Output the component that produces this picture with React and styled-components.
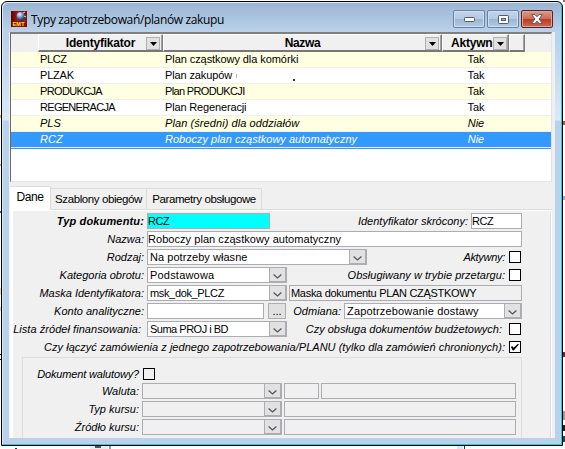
import React, { useState } from "react";
import styled, { createGlobalStyle, css } from "styled-components";

const documentTypes = [
  { id: "PLCZ", name: "Plan cząstkowy dla komórki", active: true, ls: [-0.4, -0.07] },
  { id: "PLZAK", name: "Plan zakupów", active: true, ls: [-0.2, -0.12], smudge: true },
  { id: "PRODUKCJA", name: "Plan PRODUKCJI", active: true, ls: [-0.65, -0.65] },
  { id: "REGENERACJA", name: "Plan Regeneracji", active: true, ls: [-0.7, -0.15] },
  { id: "PLS", name: "Plan (średni) dla oddziałów", active: false, ls: [0, 0.08] },
  { id: "RCZ", name: "Roboczy plan cząstkowy automatyczny", active: false, ls: [0, 0.02] },
];

function AppIcon() {
  return (
    <svg width="16" height="16" viewBox="0 0 16 16">
      <defs>
        <radialGradient id="globe" cx="40%" cy="30%" r="70%">
          <stop offset="0" stopColor="#e8f6ff" />
          <stop offset="0.5" stopColor="#6fa3cf" />
          <stop offset="1" stopColor="#23415f" />
        </radialGradient>
        <linearGradient id="iconBg" x1="0" x2="1" y1="0" y2="0">
          <stop offset="0" stopColor="#5d0505" />
          <stop offset="0.35" stopColor="#a80c0c" />
          <stop offset="1" stopColor="#8d0808" />
        </linearGradient>
      </defs>
      <rect width="16" height="16" fill="url(#iconBg)" />
      <path d="M5 10 L8 7 L13 7 L15 9 L15 11 L12 9 Z" fill="#31485c" />
      <circle cx="9.5" cy="5" r="4" fill="url(#globe)" />
      <path d="M12 2 L14 1 M13 5 L15 6" stroke="#d5e2ee" strokeWidth="1" />
      <text x="1.5" y="14.5" fontFamily="Liberation Sans, sans-serif" fontSize="5.5" fontWeight="700" fill="#ffee20" textLength="12">
        EMT
      </text>
    </svg>
  );
}

function Dropdown({ width, value, disabled, ls }) {
  return (
    <SelectBox $width={width} $disabled={disabled}>
      <SelectValue $ls={ls}>{value}</SelectValue>
      <SelectArrow>
        <svg width="9" height="5" viewBox="0 0 9 5">
          <path d="M0.6 0.6 L4.5 4 L8.4 0.6" fill="none" stroke="#555" strokeWidth="1.3" />
        </svg>
      </SelectArrow>
    </SelectBox>
  );
}

function Check({ checked, onChange, transparent }) {
  return (
    <CheckButton $transparent={transparent} onClick={onChange}>
      {checked && (
        <svg width="10" height="8" viewBox="0 0 10 8">
          <path d="M0.8 3.8 L2.4 3.2 L3.6 4.8 L8 0.8 L9 1.2 L3.8 7.4 L2.8 7.4 Z" fill="#000" />
        </svg>
      )}
    </CheckButton>
  );
}

function Filter({ right }) {
  return (
    <FilterButton $right={right}>
      <svg width="7" height="4" viewBox="0 0 7 4">
        <path d="M0 0 H7 L3.5 4 Z" fill="#000" />
      </svg>
    </FilterButton>
  );
}

function App() {
  const [selected, setSelected] = useState("RCZ");
  const [active, setActive] = useState(false);
  const [tender, setTender] = useState(false);
  const [budget, setBudget] = useState(false);
  const [merge, setMerge] = useState(true);
  const [currency, setCurrency] = useState(false);

  return (
    <Desktop>
      <GlobalStyle />
      <Speck $x={0} $y={115} $h={3} $color="#e8a040" />
      <Speck $x={0} $y={164} $h={2} $color="#e8a040" />
      <Speck $x={0} $y={211} $h={2} $color="#2860b0" />
      <Speck $x={0} $y={288} $h={7} $color="#f3dcae" />
      <Speck $x={0} $y={307} $h={4} $color="#e6cf9a" />
      <Speck $x={0} $y={354} $h={1} $color="#000" />
      <Speck $x={0} $y={359} $h={1} $color="#000" />
      <Speck $x={563} $y={0} $w={2} $h={2} $color="#777" />
      <Speck $x={563} $y={121} $w={2} $h={4} $color="#a06030" />
      <Speck $x={563} $y={196} $w={2} $h={4} $color="#86b4e0" />
      <Speck $x={563} $y={352} $w={2} $h={5} $color="#6a2a40" />
      <Speck $x={563} $y={411} $w={2} $h={9} $color="#999" />
      <Speck $x={563} $y={425} $w={2} $h={6} $color="#222" />
      <Speck $x={563} $y={436} $w={2} $h={6} $color="#174c50" />
      <Speck $x={15} $y={448} $w={2} $h={1} $color="#333" />
      <Speck $x={90} $y={446} $w={18} $h={3} $color="#ececec" />
      <Speck $x={95} $y={446} $w={6} $h={2} $color="#555" />
      <Speck $x={109} $y={446} $w={2} $h={3} $color="#999" />
      <Speck $x={457} $y={446} $w={6} $h={3} $color="#dbe6f4" />
      <Speck $x={464} $y={446} $h={3} $color="#333" />
      <Window>
        <TitleBar>
          <AppIcon />
          <Title>Typy zapotrzebowań/planów zakupu</Title>
          <WindowButtons>
            <WindowButton>
              <svg width="11" height="5" viewBox="0 0 11 5">
                <rect x="0.5" y="0.5" width="10" height="4" rx="0.8" fill="#fff" stroke="#535a6b" />
              </svg>
            </WindowButton>
            <WindowButton>
              <svg width="11" height="9" viewBox="0 0 11 9">
                <rect x="0.5" y="0.5" width="10" height="8" rx="0.8" fill="#fff" stroke="#535a6b" />
                <rect x="3.5" y="3.5" width="4" height="2" fill="#9db8d5" stroke="#535a6b" />
              </svg>
            </WindowButton>
            <WindowButton $close>
              <svg width="12" height="10" viewBox="0 0 12 10">
                <path
                  d="M0.6 0.6 H4 L6 2.8 L8 0.6 H11.4 L8 5 L11.4 9.4 H8 L6 7.2 L4 9.4 H0.6 L4 5 Z"
                  fill="#fff"
                  stroke="#535a6b"
                  strokeWidth="1"
                />
              </svg>
            </WindowButton>
          </WindowButtons>
        </TitleBar>
        <Client>
          <Table>
            <HeaderRow>
              <HeaderStub />
              <HeaderCell $width={125} $ls={-0.2}>
                <span>Identyfikator</span>
                <Filter right={2} />
              </HeaderCell>
              <HeaderCell $width={279} $ls={-0.4}>
                <span>Nazwa</span>
                <Filter right={2} />
              </HeaderCell>
              <HeaderCell $width={67} $ls={-0.2} $shift={8}>
                <span>Aktywn</span>
                <Filter right={1} />
              </HeaderCell>
              <HeaderCell $width={16} />
            </HeaderRow>
            {documentTypes.map((row) => (
              <Row
                key={row.id}
                $inactive={!row.active}
                $selected={row.id === selected}
                onClick={() => setSelected(row.id)}
              >
                <IdCell $ls={row.ls[0]}>{row.id}</IdCell>
                <NameCell $ls={row.ls[1]}>
                  {row.name}
                  {row.smudge && <Smudge />}
                </NameCell>
                <ActiveCell>{row.active ? "Tak" : "Nie"}</ActiveCell>
              </Row>
            ))}
            <NextRow />
          </Table>

          <Tabs>
            <Tab $width={41} $current>Dane</Tab>
            <Tab $width={96}>Szablony obiegów</Tab>
            <Tab $width={115}>Parametry obsługowe</Tab>
          </Tabs>

          <Page>
            <Line>
              <Label $width={132} $bold $ls={0.15}>Typ dokumentu:</Label>
              <Field $width={123} $key $ls={-0.5}>RCZ</Field>
              <RightLabel $end={3}>Identyfikator skrócony:</RightLabel>
              <Field $width={51} $ls={-0.5}>RCZ</Field>
            </Line>
            <Line>
              <Label $width={132}>Nazwa:</Label>
              <Field $width={375} $ls={0.05}>Roboczy plan cząstkowy automatyczny</Field>
            </Line>
            <Line>
              <Label $width={132}>Rodzaj:</Label>
              <Dropdown width={220} value="Na potrzeby własne" ls={0.05} />
              <RightLabel $end={4} $ls={-0.3}>Aktywny:</RightLabel>
              <Check checked={active} onChange={() => setActive(!active)} />
            </Line>
            <Line>
              <Label $width={132}>Kategoria obrotu:</Label>
              <Dropdown width={140} value="Podstawowa" ls={0.2} />
              <RightLabel $end={4} $ls={0.03}>Obsługiwany w trybie przetargu:</RightLabel>
              <Check checked={tender} onChange={() => setTender(!tender)} />
            </Line>
            <Line>
              <Label $width={132}>Maska Identyfikatora:</Label>
              <Dropdown width={140} value="msk_dok_PLCZ" ls={-0.35} />
              <Field $width={233} $left={2} $readOnly $ls={-0.3}>Maska dokumentu PLAN CZĄSTKOWY</Field>
            </Line>
            <Line>
              <Label $width={132}>Konto analityczne:</Label>
              <Field $width={117} />
              <MoreButton>...</MoreButton>
              <RightLabel $end={3}>Odmiana:</RightLabel>
              <Dropdown width={178} value="Zapotrzebowanie dostawy" ls={0.17} />
            </Line>
            <Line>
              <Label $width={132} $end={4} $ls={0.05}>Lista źródeł finansowania:</Label>
              <Dropdown width={140} value="Suma PROJ i BD" ls={-0.5} />
              <RightLabel $end={7}>Czy obsługa dokumentów budżetowych:</RightLabel>
              <Check checked={budget} onChange={() => setBudget(!budget)} />
            </Line>
            <Line>
              <RightLabel $end={4} $ls={0.02}>
                Czy łączyć zamówienia z jednego zapotrzebowania/PLANU (tylko dla zamówień chronionych):
              </RightLabel>
              <Check checked={merge} onChange={() => setMerge(!merge)} />
            </Line>

            <Group>
              <Line $tight>
                <Label $width={117} $end={2} $ls={-0.15}>Dokument walutowy?</Label>
                <Check checked={currency} onChange={() => setCurrency(!currency)} transparent />
              </Line>
              <Line>
                <Label $width={116}>Waluta:</Label>
                <Dropdown width={140} disabled />
                <Field $width={35} $left={2} $readOnly />
                <Field $width={195} $left={2} $readOnly />
              </Line>
              <Line>
                <Label $width={116}>Typ kursu:</Label>
                <Dropdown width={140} disabled />
                <Field $width={232} $left={2} $readOnly />
              </Line>
              <Line>
                <Label $width={116}>Źródło kursu:</Label>
                <Dropdown width={140} disabled />
                <Field $width={232} $left={2} $readOnly />
              </Line>
            </Group>
          </Page>
        </Client>
      </Window>
    </Desktop>
  );
}

const GlobalStyle = createGlobalStyle`
  * {
    box-sizing: border-box;
  }

  body {
    margin: 0;
    font-family: "Liberation Sans", Arial, sans-serif;
    font-size: 11px;
    color: #000;
  }

  svg {
    display: block;
    flex: none;
  }
`;

const Desktop = styled.div`
  position: relative;
  width: 565px;
  height: 449px;
  padding: 1px;
  overflow: hidden;
  background: #fff;
`;

/* bits of the program underneath that stick out around the window */
const Speck = styled.i`
  position: absolute;
  left: ${(p) => p.$x}px;
  top: ${(p) => p.$y}px;
  width: ${(p) => p.$w || 1}px;
  height: ${(p) => p.$h}px;
  background: ${(p) => p.$color};
`;

const Window = styled.div`
  position: relative;
  display: flex;
  flex-direction: column;
  width: 562px;
  height: 445px;
  padding: 0 7px 7px 7px;
  border: 1px solid #000;
  border-radius: 6px 6px 0 0;
  box-shadow: inset -1px -1px 0 #35c5dd, inset 1px 1px 0 #dbe9f7;
  background: linear-gradient(#9ab5d3, #b9d1ea 29px, #b9d1ea 35px, #dce8f5 118px, #b9d1ea 119px);
`;

const TitleBar = styled.div`
  display: flex;
  flex: none;
  height: 30px;
  padding: 9px 2px 0 2px;
`;

const Title = styled.div`
  flex: 1;
  padding-left: 4px;
  font-family: "Open Sans", "Noto Sans", sans-serif;
  font-size: 12px;
  line-height: 17px;
  letter-spacing: -0.36px;
  white-space: nowrap;
`;

const WindowButtons = styled.div`
  display: flex;
  gap: 2px;
`;

const WindowButton = styled.button`
  display: flex;
  align-items: center;
  justify-content: center;
  width: 32px;
  height: 18px;
  margin-top: -1px;
  padding: 0;
  border: 1px solid ${(p) => (p.$close ? "#5b2420" : "#6883a3")};
  border-radius: 2px;
  box-shadow: inset 0 0 0 1px ${(p) => (p.$close ? "#e3a297" : "#cfdeee")};
  background: ${(p) =>
    p.$close
      ? "linear-gradient(#dc9a8b, #cd6d58 48%, #b93a22 50%, #cb6b4d)"
      : "linear-gradient(#c2d5ea, #b3cae3 48%, #98b5d3 50%, #b3cce6)"};
`;

const Client = styled.div`
  flex: 1;
  min-height: 0;
  overflow: hidden;
  padding: 0 3px 0 1px;
  background: #f0f0f0;
`;

const Table = styled.div`
  height: 150px;
  border: 1px solid #e3e3e3;
  border-top: 2px solid #808080;
  border-left: 1px solid #696969;
  background: #fff;
`;

const HeaderRow = styled.div`
  display: flex;
  height: 18px;
  background: #f0f0f0;
`;

const HeaderStub = styled.div`
  width: 27px;
`;

const HeaderCell = styled.div`
  position: relative;
  display: flex;
  align-items: center;
  justify-content: ${(p) => (p.$shift ? "flex-start" : "center")};
  width: ${(p) => p.$width}px;
  padding-left: ${(p) => p.$shift || 0}px;
  border: 1px solid #fff;
  border-right: 1px solid #808080;
  border-bottom: 2px solid #777;
  box-shadow: inset -1px 0 0 #a0a0a0;
  font-size: 12px;
  font-weight: 700;
  letter-spacing: ${(p) => p.$ls || 0}px;
`;

/* sits on top of the column caption when the column is narrow */
const FilterButton = styled.button`
  position: absolute;
  right: ${(p) => p.$right}px;
  top: 2px;
  display: flex;
  align-items: center;
  justify-content: center;
  width: 14px;
  height: 13px;
  padding: 0;
  border: 1px solid #b0b0b0;
  background: #e1e1e1;
`;

const Row = styled.div`
  display: flex;
  height: 16px;
  line-height: 15px;
  border-bottom: 1px solid #efefef;
  background: #fff;

  &:nth-child(even) {
    background: #ffffe1;
  }

  ${(p) => p.$inactive && css`font-style: italic;`}

  ${(p) =>
    p.$selected &&
    css`
      && {
        background: #3399ff;
        color: #fff;
      }
    `}
`;

const IdCell = styled.div`
  width: 154px;
  padding-left: 29px;
  letter-spacing: ${(p) => p.$ls}px;
`;

const NameCell = styled.div`
  position: relative;
  width: 276px;
  white-space: nowrap;
  letter-spacing: ${(p) => p.$ls}px;
`;

const Smudge = styled.i`
  position: absolute;
  left: 71px;
  top: 6px;
  width: 1px;
  height: 4px;
  background: #d8b088;

  &::after {
    content: "";
    position: absolute;
    left: 57px;
    top: 5px;
    width: 2px;
    height: 2px;
    background: #333;
  }
`;

const ActiveCell = styled.div`
  width: 70px;
  text-align: center;
`;

const NextRow = styled.div`
  height: 1px;
  background: #3399ff;
`;

const Tabs = styled.div`
  display: flex;
  align-items: flex-end;
  height: 28px;
  padding-top: 4px;
  border-bottom: 1px solid #dcdcdc;
`;

const Tab = styled.div`
  width: ${(p) => p.$width}px;
  height: 21px;
  border: 1px solid #dcdcdc;
  border-left: none;
  border-bottom: none;
  font-size: ${(p) => (p.$current ? 12 : 11.5)}px;
  line-height: 20px;
  letter-spacing: -0.4px;
  text-align: center;
  white-space: nowrap;

  ${(p) =>
    p.$current &&
    css`
      height: 24px;
      margin-bottom: -1px;
      background: #fff;
    `}
`;

const Page = styled.div`
  height: 240px;
  padding: 2px 0 0;
  border-left: 3px solid #fff;
  border-top: 1px solid #fff;
  border-right: 1px solid #fff;
  box-shadow: inset -1px 0 0 #dcdcdc;
`;

const Line = styled.div`
  display: flex;
  align-items: center;
  width: 509px;
  height: 16px;
  margin-bottom: ${(p) => (p.$tight ? 1 : 2)}px;
`;

const Label = styled.div`
  flex: none;
  width: ${(p) => p.$width}px;
  margin-right: 2px;
  padding-right: ${(p) => p.$end || 1}px;
  font-style: italic;
  font-weight: ${(p) => (p.$bold ? 700 : 400)};
  letter-spacing: ${(p) => p.$ls || 0}px;
  text-align: right;
  white-space: nowrap;
`;

const RightLabel = styled.div`
  flex: 1;
  padding-right: ${(p) => p.$end}px;
  font-style: italic;
  letter-spacing: ${(p) => p.$ls || 0}px;
  text-align: right;
  white-space: nowrap;
`;

const Field = styled.div`
  flex: none;
  width: ${(p) => p.$width}px;
  height: 16px;
  margin-left: ${(p) => p.$left || 0}px;
  padding-left: ${(p) => (p.$readOnly ? 1 : 0)}px;
  border: 1px solid #abadb3;
  background: ${(p) => (p.$key ? "#00ffff" : p.$readOnly ? "#f0f0f0" : "#fff")};
  line-height: 15px;
  white-space: nowrap;
  letter-spacing: ${(p) => p.$ls || 0}px;
`;

const SelectBox = styled.div`
  display: flex;
  flex: none;
  width: ${(p) => p.$width}px;
  height: 16px;
  border: 1px solid #abadb3;
  background: ${(p) => (p.$disabled ? "#f0f0f0" : "#fff")};
`;

const SelectValue = styled.div`
  flex: 1;
  padding-left: 2px;
  line-height: 15px;
  white-space: nowrap;
  letter-spacing: ${(p) => p.$ls || 0}px;
`;

const SelectArrow = styled.div`
  display: flex;
  align-items: center;
  justify-content: center;
  width: 17px;
  padding-top: 3px;
  border: 1px solid #abadb3;
  border-top: none;
  background: #e1e1e1;
`;

const CheckButton = styled.button`
  display: flex;
  align-items: center;
  justify-content: center;
  width: 12px;
  height: 12px;
  margin-right: 1px;
  padding: 0;
  border: 1px solid #000;
  background: ${(p) => (p.$transparent ? "transparent" : "#fff")};
`;

const MoreButton = styled.button`
  flex: none;
  width: 18px;
  height: 16px;
  margin-left: 4px;
  padding: 0;
  border: 1px solid #adadad;
  background: #e1e1e1;
  font: 11px/14px "Liberation Sans", Arial, sans-serif;
`;

const Group = styled.div`
  width: 500px;
  height: 90px;
  margin: 0 0 0 9px;
  padding: 8px 0 0 1px;
  border: 1px solid #dcdcdc;
  border-bottom: none;
`;

export default App;
